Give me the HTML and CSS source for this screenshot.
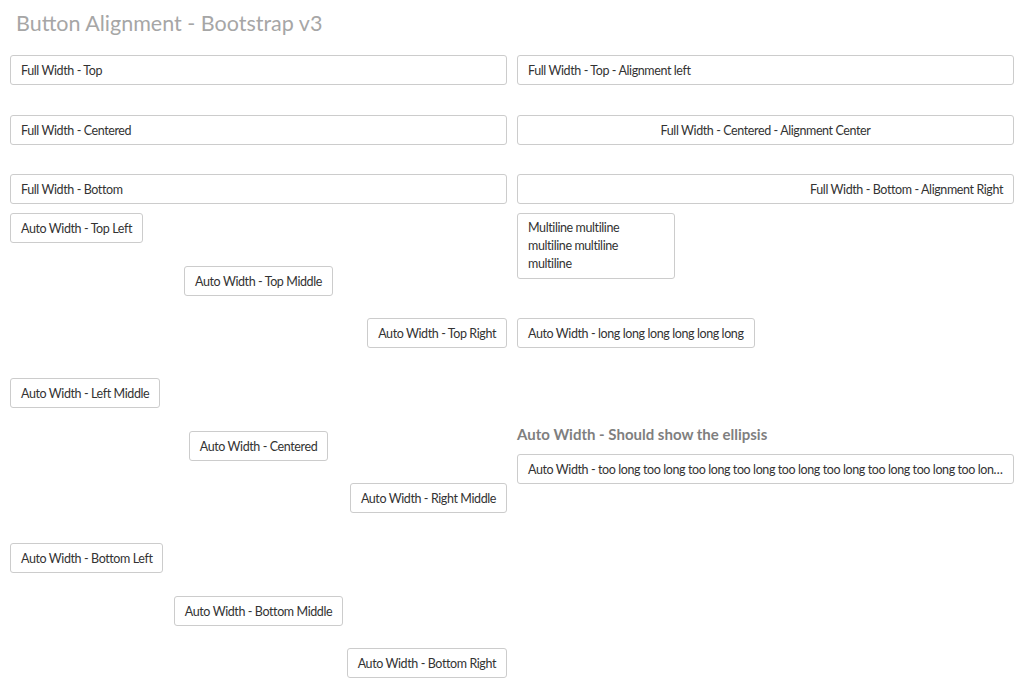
FILE: index.html
```html
<!DOCTYPE html>
<html>
<head>
<meta charset="utf-8">
<link rel="stylesheet" href="styles.css">
</head>
<body>
<div class="page">
  <h1 class="title">Button Alignment - Bootstrap v3</h1>
  <div class="columns">
    <div class="col">
      <div class="full-group">
        <button class="btn">Full Width - Top</button>
        <button class="btn">Full Width - Centered</button>
        <button class="btn">Full Width - Bottom</button>
      </div>
      <div class="auto-groups">
        <div class="auto-group">
          <button class="btn auto start">Auto Width - Top Left</button>
          <button class="btn auto middle">Auto Width - Top Middle</button>
          <button class="btn auto end">Auto Width - Top Right</button>
        </div>
        <div class="auto-group">
          <button class="btn auto start">Auto Width - Left Middle</button>
          <button class="btn auto middle">Auto Width - Centered</button>
          <button class="btn auto end">Auto Width - Right Middle</button>
        </div>
        <div class="auto-group">
          <button class="btn auto start">Auto Width - Bottom Left</button>
          <button class="btn auto middle">Auto Width - Bottom Middle</button>
          <button class="btn auto end">Auto Width - Bottom Right</button>
        </div>
      </div>
    </div>
    <div class="col">
      <div class="full-group">
        <button class="btn">Full Width - Top - Alignment left</button>
        <button class="btn center-text">Full Width - Centered - Alignment Center</button>
        <button class="btn right-text">Full Width - Bottom - Alignment Right</button>
      </div>
      <div class="auto-groups">
        <div class="auto-group">
          <button class="btn auto start multiline">Multiline multiline multiline multiline multiline</button>
          <button class="btn auto start">Auto Width - long long long long long long</button>
        </div>
        <div class="ellipsis-group">
          <h2 class="subhead">Auto Width - Should show the ellipsis</h2>
          <button class="btn ellipsis">Auto Width - too long too long too long too long too long too long too long too long too long too long too long too long</button>
        </div>
      </div>
    </div>
  </div>
</div>
</body>
</html>
```
FILE: styles.css
```css
* { box-sizing: border-box; }
html, body { margin: 0; padding: 0; background: #fff; }
body { font-family: Lato, "Liberation Sans", sans-serif; color: #333; }
.page { padding: 0 10px; }
.title {
  margin: 0;
  padding: 10px 0 0 6px;
  height: 55px;
  font-size: 21.5px;
  font-weight: 400;
  color: #a6a6a6;
  line-height: 26px;
}
.columns {
  display: grid;
  grid-template-columns: minmax(0, 1fr) minmax(0, 1fr);
  column-gap: 10px;
}
.col { display: flex; flex-direction: column; min-width: 0; }
.full-group {
  height: 149px;
  display: flex;
  flex-direction: column;
  justify-content: space-between;
}
.btn {
  display: block;
  height: 30px;
  padding: 6px 10px 4px;
  border: 1px solid #ccc;
  border-radius: 3px;
  background: #fff;
  color: #333;
  font-family: inherit;
  font-size: 12.5px;
  letter-spacing: -0.4px;
  line-height: 18px;
  text-align: left;
  white-space: nowrap;
  overflow: hidden;
  text-overflow: ellipsis;
  width: 100%;
  max-width: 100%;
}
.center-text { text-align: center; }
.right-text { text-align: right; }
.auto-groups {
  margin-top: 9px;
  display: flex;
  flex-direction: column;
  gap: 30px;
}
.auto-group {
  height: 135px;
  display: flex;
  flex-direction: column;
  justify-content: space-between;
}
.btn.auto { width: auto; }
.start { align-self: flex-start; }
.middle { align-self: center; }
.end { align-self: flex-end; }
.btn.multiline {
  width: 158px;
  height: auto;
  padding: 5px 10px;
  white-space: normal;
}
.ellipsis-group {
  height: 135px;
  display: flex;
  flex-direction: column;
  padding-top: 47px;
  gap: 11px;
}
.subhead {
  margin: 0;
  font-size: 15px;
  font-weight: 700;
  line-height: 18px;
  color: #7f7f7f;
}
```
